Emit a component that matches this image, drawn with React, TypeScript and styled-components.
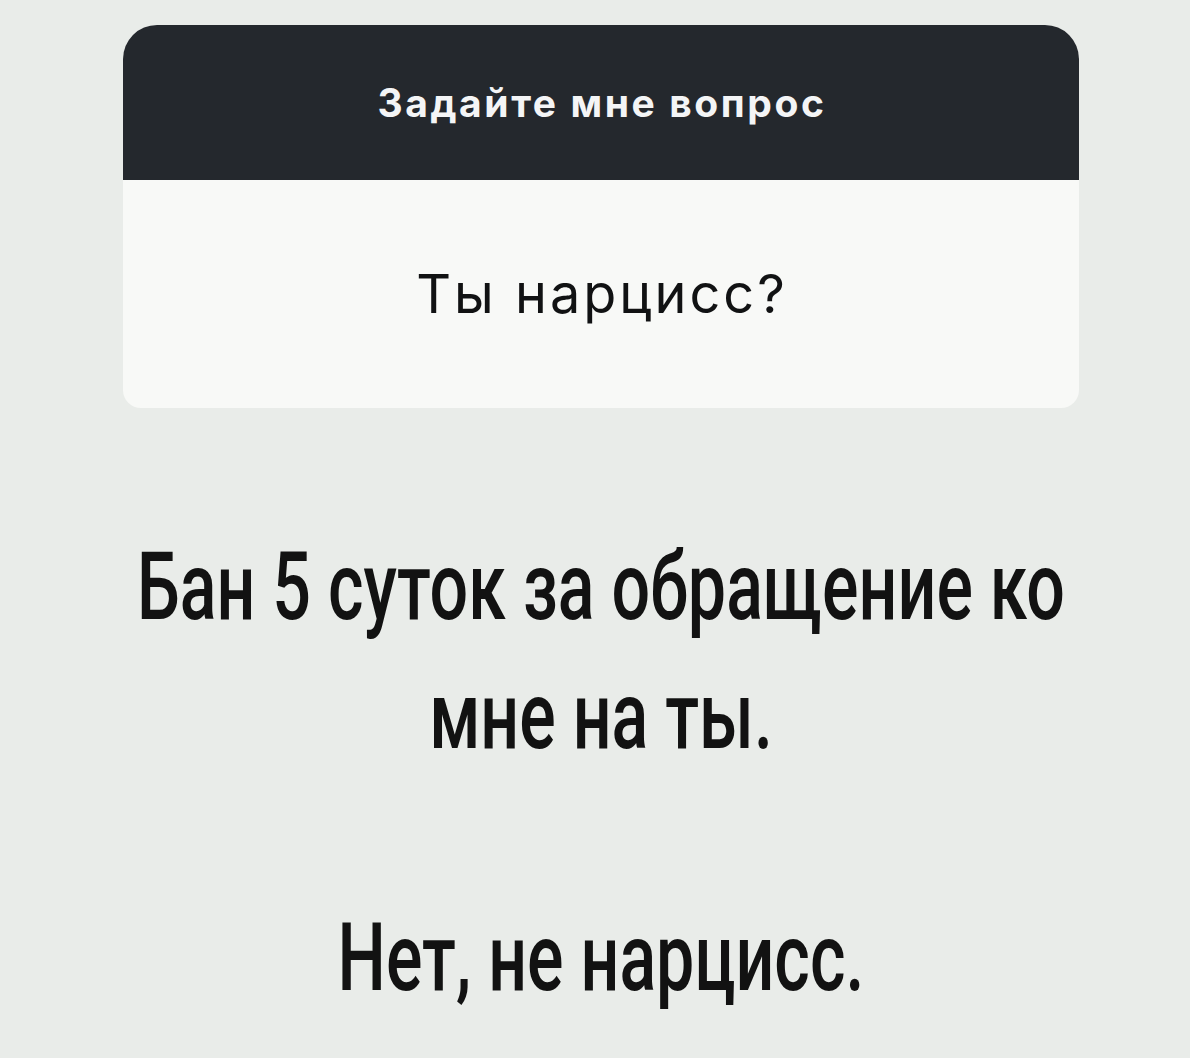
import React from "react";
import styled, { createGlobalStyle } from "styled-components";

const GlobalStyle = createGlobalStyle`
  html, body {
    margin: 0;
    padding: 0;
    background: #e9ece9;
  }
  body {
    font-family: Inter, Roboto, "Liberation Sans", sans-serif;
    -webkit-font-smoothing: antialiased;
  }
`;

const Page = styled.main`
  width: 1190px;
  min-height: 1058px;
  display: flex;
  flex-direction: column;
  align-items: center;
  padding-top: 25px;
  box-sizing: border-box;
  overflow: hidden;
`;

const QuestionCard = styled.section`
  width: 956px;
  margin-left: 11px;
  display: flex;
  flex-direction: column;
  border-radius: 34px 34px 18px 18px;
  overflow: hidden;
  background: #f8f9f7;
`;

const CardHeader = styled.header`
  height: 155px;
  background: #24282d;
  display: flex;
  align-items: center;
  justify-content: center;
`;

const HeaderTitle = styled.h2`
  margin: 0 0 0 3px;
  font-family: Inter, "Open Sans", sans-serif;
  font-weight: 700;
  font-size: 39px;
  letter-spacing: 2.6px;
  line-height: 1;
  color: #f4f5f6;
`;

const CardBody = styled.div`
  height: 228px;
  display: flex;
  align-items: center;
  justify-content: center;
`;

const QuestionText = styled.p`
  margin: 0 0 0 3px;
  font-family: Inter, "Liberation Sans", sans-serif;
  font-weight: 400;
  font-size: 54px;
  letter-spacing: 3px;
  line-height: 1;
  color: #111213;
`;

/* Condensed display text: Roboto squeezed horizontally around the column centre */
const Answer = styled.div`
  width: 1320px;
  margin-left: 12px;
  margin-top: 115px;
  display: flex;
  flex-direction: column;
  gap: 113px;
  transform: scaleX(0.725);
  transform-origin: center top;
`;

const AnswerLine = styled.p`
  margin: 0;
  font-family: Roboto, "Liberation Sans", sans-serif;
  font-weight: 500;
  font-size: 94px;
  line-height: 129px;
  text-align: center;
  color: #121212;
  white-space: nowrap;
`;

export default function App() {
  return (
    <>
      <GlobalStyle />
      <Page>
        <QuestionCard>
          <CardHeader>
            <HeaderTitle>Задайте мне вопрос</HeaderTitle>
          </CardHeader>
          <CardBody>
            <QuestionText>Ты нарцисс?</QuestionText>
          </CardBody>
        </QuestionCard>
        <Answer>
          <AnswerLine>
            Бан 5 суток за обращение ко
            <br />
            мне на ты.
          </AnswerLine>
          <AnswerLine>Нет, не нарцисс.</AnswerLine>
        </Answer>
      </Page>
    </>
  );
}
